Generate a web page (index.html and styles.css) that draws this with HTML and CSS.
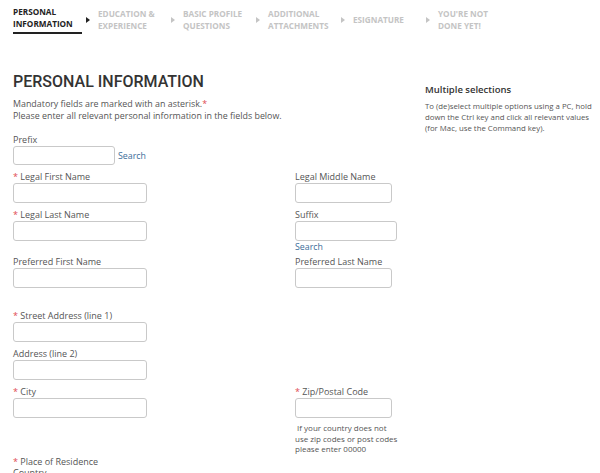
FILE: index.html
```html
<!DOCTYPE html>
<html lang="en">
<head>
    <meta charset="UTF-8">
    <title>Personal information</title>
    <link rel="stylesheet" href="styles.css">
</head>
<body>
    <div class="steps">
        <div class="step active"><span class="step-name">Personal<br>Information</span><span class="arrow"></span></div>
        <div class="step"><span class="step-name">Education &amp;<br>Experience</span><span class="arrow"></span></div>
        <div class="step"><span class="step-name">Basic Profile<br>Questions</span><span class="arrow"></span></div>
        <div class="step"><span class="step-name">Additional<br>Attachments</span><span class="arrow"></span></div>
        <div class="step"><span class="step-name">eSignature</span><span class="arrow"></span></div>
        <div class="step"><span class="step-name">You're not<br>done yet!</span></div>
    </div>

    <div class="page">
        <div class="form">
            <h1>PERSONAL INFORMATION</h1>
            <p class="intro">Mandatory fields are marked with an asterisk.<span class="req">*</span><br>Please enter all relevant personal information in the fields below.</p>

            <div class="row">
                <div class="field">
                    <label>Prefix</label>
                    <div class="with-search">
                        <input type="text" class="w-prefix">
                        <a class="search">Search</a>
                    </div>
                </div>
            </div>

            <div class="row">
                <div class="field">
                    <label><span class="req">*</span> Legal First Name</label>
                    <input type="text" class="w-long">
                </div>
                <div class="field">
                    <label>Legal Middle Name</label>
                    <input type="text" class="w-short">
                </div>
            </div>

            <div class="row">
                <div class="field">
                    <label><span class="req">*</span> Legal Last Name</label>
                    <input type="text" class="w-long">
                </div>
                <div class="field">
                    <label>Suffix</label>
                    <input type="text" class="w-suffix">
                    <a class="search block">Search</a>
                </div>
            </div>

            <div class="row">
                <div class="field">
                    <label>Preferred First Name</label>
                    <input type="text" class="w-long">
                </div>
                <div class="field">
                    <label>Preferred Last Name</label>
                    <input type="text" class="w-short">
                </div>
            </div>

            <div class="row spaced">
                <div class="field">
                    <label><span class="req">*</span> Street Address (line 1)</label>
                    <input type="text" class="w-long">
                </div>
            </div>

            <div class="row">
                <div class="field">
                    <label>Address (line 2)</label>
                    <input type="text" class="w-long">
                </div>
            </div>

            <div class="row city">
                <div class="field">
                    <label><span class="req">*</span> City</label>
                    <input type="text" class="w-long">
                </div>
                <div class="field">
                    <label><span class="req">*</span> Zip/Postal Code</label>
                    <input type="text" class="w-short">
                    <p class="hint">&nbsp;If your country does not<br>use zip codes or post codes<br>please enter 00000</p>
                </div>
            </div>

            <div class="row last">
                <div class="field">
                    <label class="narrow"><span class="req">*</span> Place of Residence Country</label>
                </div>
            </div>
        </div>

        <div class="sidebar">
            <h3>Multiple selections</h3>
            <p>To (de)select multiple options using a PC, hold down the Ctrl key and click all relevant values (for Mac, use the Command key).</p>
        </div>
    </div>
</body>
</html>
```

FILE: styles.css
```css
body {
    margin: 0;
    font-family: 'Open Sans', Arial, sans-serif;
    color: #555;
    background: #fff;
}
.steps {
    display: flex;
    padding: 6px 0 0 13px;
}
.step {
    width: 85px;
    display: flex;
    align-items: center;
    flex-shrink: 0;
}
.step:first-child {
    align-items: flex-start;
}
.step-name {
    font-size: 8.2px;
    font-weight: bold;
    text-transform: uppercase;
    line-height: 12px;
    color: #c4c4c4;
    width: 73px;
}
.step.active .step-name {
    color: #222;
    width: 69px;
    padding-bottom: 2px;
    border-bottom: 2px solid #222;
}
.step.active .arrow {
    margin: 11px 0 0 4px;
    border-left-color: #222;
}
.arrow {
    width: 0;
    height: 0;
    border-left: 4px solid #c4c4c4;
    border-top: 3px solid transparent;
    border-bottom: 3px solid transparent;
}
.page {
    display: flex;
    padding-left: 13px;
}
.form {
    width: 412px;
}
h1 {
    font-family: Roboto, 'Open Sans', Arial, sans-serif;
    font-size: 16px;
    font-weight: 500;
    color: #333;
    margin: 38px 0 0 0;
    line-height: 20px;
}
.intro {
    font-size: 8.9px;
    line-height: 12px;
    margin: 6px 0 12px 0;
}
.req {
    color: #e04a4f;
}
.row {
    display: grid;
    grid-template-columns: 282px 1fr;
    margin-bottom: 6px;
}
.row.spaced {
    margin-top: 22px;
}
.row.city {
    margin-top: 1px;
}
.row.last {
    margin-top: -5px;
}
.field label {
    display: block;
    font-size: 9px;
    line-height: 12px;
}
.field label.narrow {
    width: 110px;
    line-height: 11.5px;
}
.field input {
    display: block;
    box-sizing: border-box;
    height: 20px;
    margin: 0;
    border: 1px solid #c9c9c9;
    border-radius: 3px;
    background: #fff;
}
.with-search {
    display: flex;
    align-items: center;
    gap: 3px;
}
.with-search input {
    height: 19px;
}
.w-prefix { width: 102px; }
.w-long { width: 134px; }
.w-short { width: 97px; }
.w-suffix { width: 102px; }
.search {
    font-size: 8.8px;
    color: #3b6d9a;
    line-height: 10px;
}
.search.block {
    display: block;
    margin: 2px 0 -2px 0;
    line-height: 9px;
}
.hint {
    font-size: 8px;
    line-height: 10.5px;
    margin: 5px 0 0 0;
}
.sidebar {
    width: 172px;
    margin-top: 50px;
}
.sidebar h3 {
    font-size: 9.5px;
    font-weight: 600;
    color: #333;
    margin: 0 0 5px 0;
    line-height: 12px;
}
.sidebar p {
    font-size: 7.8px;
    line-height: 11px;
    margin: 0;
}
```
